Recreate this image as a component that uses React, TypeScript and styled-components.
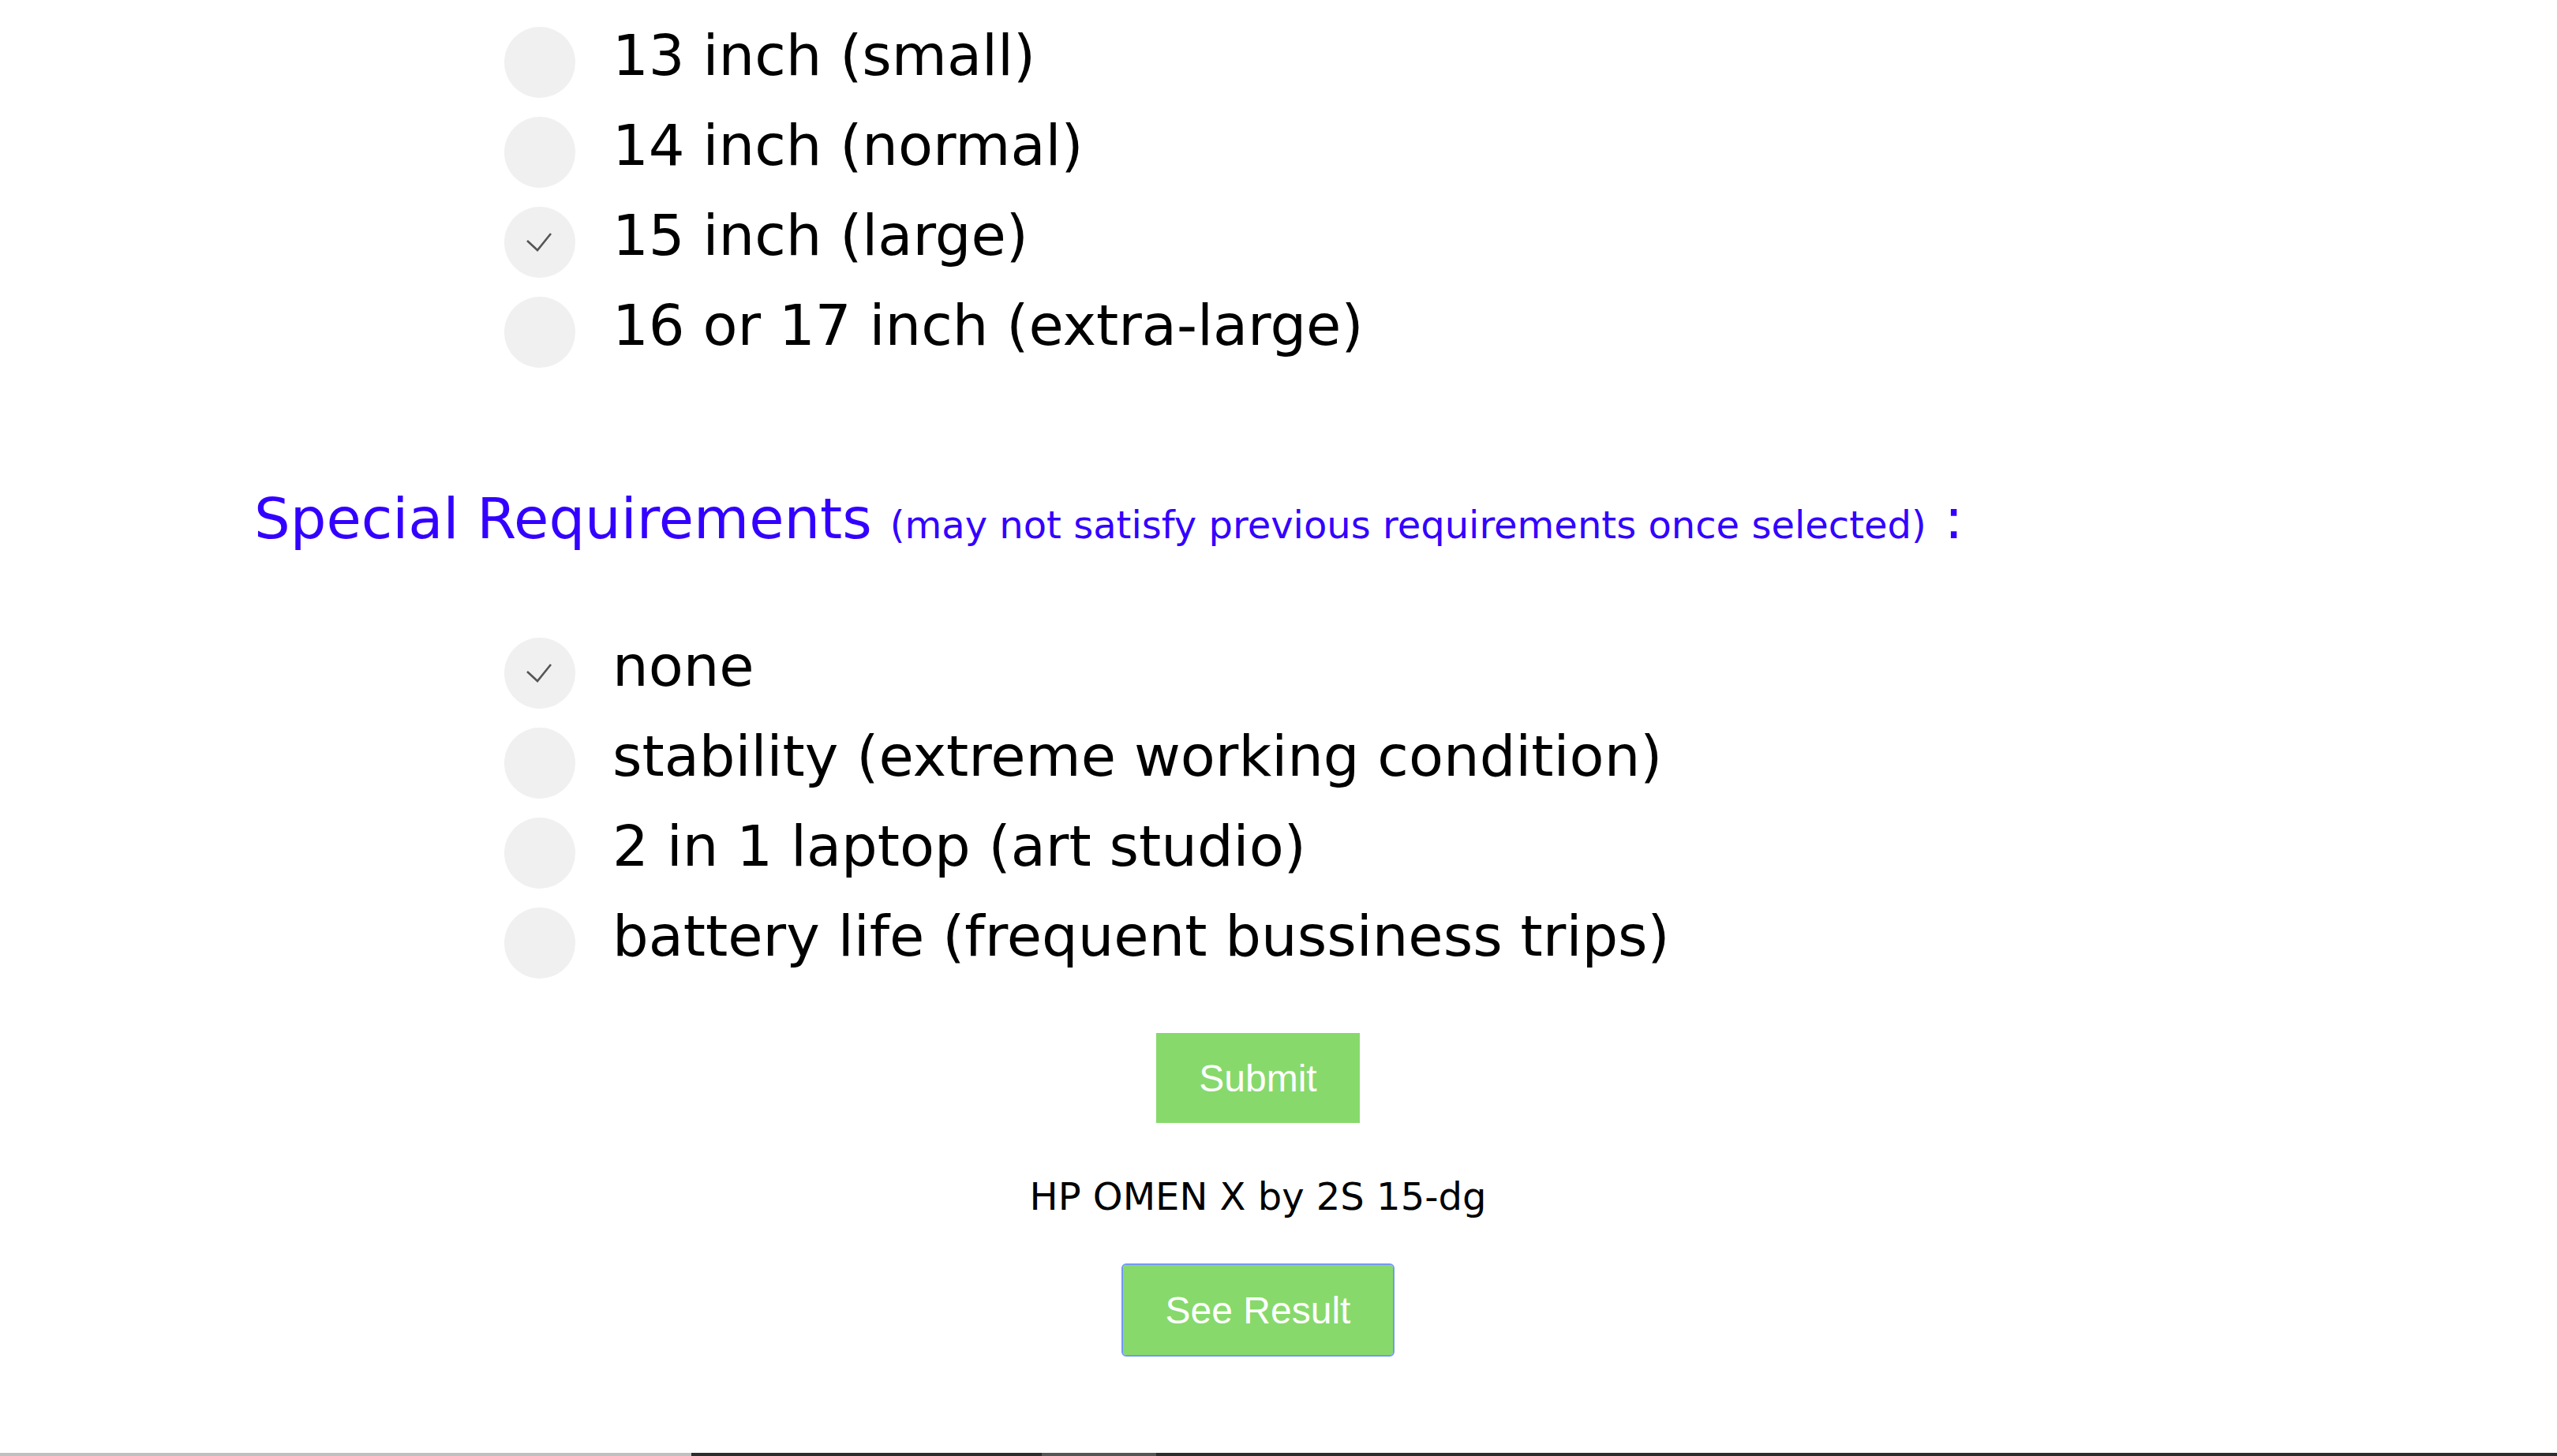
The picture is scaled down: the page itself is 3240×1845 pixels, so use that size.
import React from "react";
import styled, { createGlobalStyle } from "styled-components";

const GlobalStyle = createGlobalStyle`
  html, body {
    margin: 0;
    padding: 0;
    background: #ffffff;
  }
  body {
    font-family: "DejaVu Sans", Verdana, sans-serif;
    color: #000000;
  }
  * { box-sizing: border-box; }
`;

const Page = styled.div`
  min-height: 1845px;
  display: flex;
  flex-direction: column;
  padding-top: 28px;
`;

const OptionList = styled.div<{ $gapTop?: number }>`
  display: flex;
  flex-direction: column;
  padding-left: 639px;
  margin-top: ${(p) => p.$gapTop ?? 0}px;
`;

const OptionRow = styled.label`
  display: flex;
  align-items: flex-start;
  gap: 47px;
  height: 114px;
  cursor: pointer;
`;

const Circle = styled.span`
  flex: none;
  width: 90px;
  height: 90px;
  margin-top: 6px;
  border-radius: 50%;
  background: #f0f0f0;
  display: flex;
  align-items: center;
  justify-content: center;
`;

const OptionText = styled.span`
  font-size: 72px;
  line-height: 84px;
  white-space: nowrap;
`;

const Heading = styled.h2`
  margin: 131px 0 0 0;
  padding-left: 322px;
  font-weight: normal;
  font-size: 72px;
  line-height: 84px;
  color: #3300ff;
  white-space: nowrap;
`;

const HeadingNote = styled.span`
  font-size: 48px;
  line-height: 1;
`;

const Actions = styled.div`
  display: flex;
  flex-direction: column;
  align-items: center;
  padding-right: 52px;
  margin-top: 51px;
`;

const Button = styled.button<{ $focused?: boolean }>`
  height: 114px;
  padding: 0 54px;
  border: none;
  background: #87d96c;
  color: #ffffff;
  font-family: "Liberation Sans", Arial, sans-serif;
  font-size: 48px;
  cursor: pointer;
  border-radius: ${(p) => (p.$focused ? "4px" : "0")};
  outline: ${(p) => (p.$focused ? "2px solid #7298f6" : "none")};
  outline-offset: 0;
`;

const ResultText = styled.div`
  margin: 65px 0 59px 0;
  font-size: 48px;
  line-height: 56px;
  color: #000000;
`;

const ScrollStrip = styled.div`
  margin-top: auto;
  height: 4px;
  display: flex;
`;

const StripPart = styled.div<{ $w?: number; $color: string }>`
  flex: ${(p) => (p.$w ? `0 0 ${p.$w}px` : "1")};
  background: ${(p) => p.$color};
`;

const Check = () => (
  <svg width="90" height="90" viewBox="0 0 90 90" aria-hidden="true">
    <polyline
      points="29,43 42,55 59,34"
      fill="none"
      stroke="#555555"
      strokeWidth="2.6"
    />
  </svg>
);

type Opt = { label: string; checked?: boolean };

const sizes: Opt[] = [
  { label: "13 inch (small)" },
  { label: "14 inch (normal)" },
  { label: "15 inch (large)", checked: true },
  { label: "16 or 17 inch (extra-large)" },
];

const specials: Opt[] = [
  { label: "none", checked: true },
  { label: "stability (extreme working condition)" },
  { label: "2 in 1 laptop (art studio)" },
  { label: "battery life (frequent bussiness trips)" },
];

const Options = ({ items, gapTop }: { items: Opt[]; gapTop?: number }) => (
  <OptionList $gapTop={gapTop}>
    {items.map((o) => (
      <OptionRow key={o.label}>
        <Circle>{o.checked ? <Check /> : null}</Circle>
        <OptionText>{o.label}</OptionText>
      </OptionRow>
    ))}
  </OptionList>
);

export default function App() {
  return (
    <>
      <GlobalStyle />
      <Page>
        <Options items={sizes} />
        <Heading>
          Special Requirements{" "}
          <HeadingNote>(may not satisfy previous requirements once selected)</HeadingNote>{" "}
          :
        </Heading>
        <Options items={specials} gapTop={103} />
        <Actions>
          <Button>Submit</Button>
          <ResultText>HP OMEN X by 2S 15-dg</ResultText>
          <Button $focused>See Result</Button>
        </Actions>
        <ScrollStrip>
          <StripPart $w={876} $color="#c0c0c0" />
          <StripPart $w={444} $color="#2c2c2c" />
          <StripPart $w={145} $color="#555555" />
          <StripPart $color="#2c2c2c" />
        </ScrollStrip>
      </Page>
    </>
  );
}
